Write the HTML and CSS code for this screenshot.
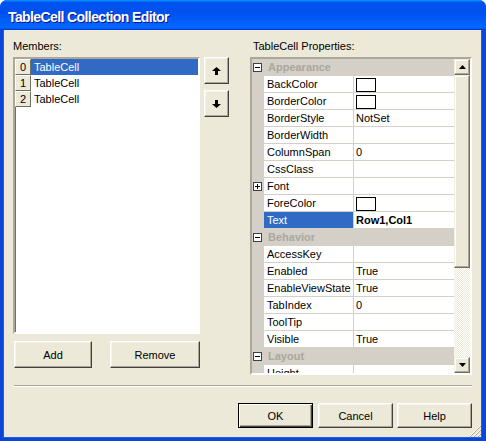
FILE: index.html
```html
<!DOCTYPE html>
<html lang="en">
<head>
<meta charset="utf-8">
<title>TableCell Collection Editor</title>
<link rel="stylesheet" href="styles.css">
</head>
<body>
<div class="window">
  <div class="titlebar"><span class="title">TableCell Collection Editor</span></div>
  <div class="client">
    <div class="top">
      <div class="members">
        <div class="label">Members:</div>
        <div class="members-main">
          <div class="listbox">
            <div class="lrow selected"><span class="idx">0</span><span class="lname">TableCell</span></div>
            <div class="lrow"><span class="idx">1</span><span class="lname">TableCell</span></div>
            <div class="lrow"><span class="idx">2</span><span class="lname">TableCell</span></div>
          </div>
          <div class="order-btns">
            <button class="btn order" type="button" aria-label="Move up">
              <svg width="9" height="8" viewBox="0 0 9 8"><polygon points="4.5,0 9,4 6,4 6,8 3,8 3,4 0,4" fill="#000"/></svg>
            </button>
            <button class="btn order" type="button" aria-label="Move down">
              <svg width="9" height="8" viewBox="0 0 9 8"><polygon points="4.5,8 9,4 6,4 6,0 3,0 3,4 0,4" fill="#000"/></svg>
            </button>
          </div>
        </div>
        <div class="member-actions">
          <button class="btn add" type="button">Add</button>
          <button class="btn remove" type="button">Remove</button>
        </div>
      </div>
      <div class="props">
        <div class="label props-label">TableCell Properties:</div>
        <div class="grid">
          <div class="rows">
            <div class="prow cat"><span class="gutter"><i class="expander"></i></span><span class="cname">Appearance</span></div>
            <div class="prow"><span class="gutter"></span><span class="pname">BackColor</span><span class="pval"><i class="swatch"></i></span></div>
            <div class="prow"><span class="gutter"></span><span class="pname">BorderColor</span><span class="pval"><i class="swatch"></i></span></div>
            <div class="prow"><span class="gutter"></span><span class="pname">BorderStyle</span><span class="pval">NotSet</span></div>
            <div class="prow"><span class="gutter"></span><span class="pname">BorderWidth</span><span class="pval"></span></div>
            <div class="prow"><span class="gutter"></span><span class="pname">ColumnSpan</span><span class="pval">0</span></div>
            <div class="prow"><span class="gutter"></span><span class="pname">CssClass</span><span class="pval"></span></div>
            <div class="prow"><span class="gutter"><i class="expander plus"></i></span><span class="pname">Font</span><span class="pval"></span></div>
            <div class="prow"><span class="gutter"></span><span class="pname">ForeColor</span><span class="pval"><i class="swatch"></i></span></div>
            <div class="prow"><span class="gutter"></span><span class="pname sel">Text</span><span class="pval bold">Row1,Col1</span></div>
            <div class="prow cat"><span class="gutter"><i class="expander"></i></span><span class="cname">Behavior</span></div>
            <div class="prow"><span class="gutter"></span><span class="pname">AccessKey</span><span class="pval"></span></div>
            <div class="prow"><span class="gutter"></span><span class="pname">Enabled</span><span class="pval">True</span></div>
            <div class="prow"><span class="gutter"></span><span class="pname">EnableViewState</span><span class="pval">True</span></div>
            <div class="prow"><span class="gutter"></span><span class="pname">TabIndex</span><span class="pval">0</span></div>
            <div class="prow"><span class="gutter"></span><span class="pname">ToolTip</span><span class="pval"></span></div>
            <div class="prow"><span class="gutter"></span><span class="pname">Visible</span><span class="pval">True</span></div>
            <div class="prow cat"><span class="gutter"><i class="expander"></i></span><span class="cname">Layout</span></div>
            <div class="prow"><span class="gutter"></span><span class="pname">Height</span><span class="pval"></span></div>
          </div>
          <div class="vscroll">
            <div class="sb-btn">
              <svg width="7" height="4" viewBox="0 0 7 4"><polygon points="3.5,0 7,4 0,4" fill="#000"/></svg>
            </div>
            <div class="sb-thumb"></div>
            <div class="sb-track"></div>
            <div class="sb-btn">
              <svg width="7" height="4" viewBox="0 0 7 4"><polygon points="0,0 7,0 3.5,4" fill="#000"/></svg>
            </div>
          </div>
        </div>
      </div>
    </div>
    <div class="separator"></div>
    <div class="dialog-btns">
      <button class="btn dlg default" type="button">OK</button>
      <button class="btn dlg cancel" type="button">Cancel</button>
      <button class="btn dlg help" type="button">Help</button>
    </div>
    <svg class="grip" width="12" height="12" viewBox="0 0 12 12">
      <g stroke-width="1">
        <line x1="11" y1="1" x2="1" y2="11" stroke="#fff"/>
        <line x1="12" y1="1" x2="1" y2="12" stroke="#aca899"/>
        <line x1="11" y1="5" x2="5" y2="11" stroke="#fff"/>
        <line x1="12" y1="5" x2="5" y2="12" stroke="#aca899"/>
        <line x1="11" y1="9" x2="9" y2="11" stroke="#fff"/>
        <line x1="12" y1="9" x2="9" y2="12" stroke="#aca899"/>
      </g>
    </svg>
  </div>
</div>
</body>
</html>
```
FILE: styles.css
```css
* { box-sizing: border-box; }

html, body {
  margin: 0;
  padding: 0;
  background: #ffffff;
}

body {
  font-family: "Liberation Sans", Arial, sans-serif;
  font-size: 11px;
  color: #000;
}

/* window frame */
.window {
  width: 486px;
  height: 441px;
  display: flex;
  flex-direction: column;
  background: #0a46d8;
  border-radius: 7px 7px 0 0;
  overflow: hidden;
}

.titlebar {
  height: 30px;
  flex: none;
  display: flex;
  align-items: center;
  padding: 3px 0 0 8px;
  background: linear-gradient(180deg, #0997ff 0, #0053ee 8%, #0050ee 40%, #0066ff 88%, #0066ff 93%, #005bff 95%, #003dd7 96%, #003dd7 100%);
}

.title {
  font-family: "Liberation Sans", Arial, sans-serif;
  font-weight: bold;
  font-size: 14px;
  letter-spacing: -0.6px;
  color: #fff;
  text-shadow: 1px 1px #0f1089;
}

.client {
  position: relative;
  flex: 1;
  margin: 0 4px 3px 3px;
  border: 1px solid #1c5ee8;
  border-top: 0;
  background: #ece9d8;
  padding: 10px 9px 9px 9px;
  display: flex;
  flex-direction: column;
}

.label {
  height: 13px;
  line-height: 13px;
  margin-bottom: 4px;
  white-space: nowrap;
}

.top {
  display: flex;
  align-items: flex-start;
  height: 335px;
}

/* members list */
.members {
  display: flex;
  flex-direction: column;
}

.members-main {
  display: flex;
  align-items: flex-start;
}

.listbox {
  width: 187px;
  height: 277px;
  background: #fff;
  border: 2px solid;
  border-color: #aca899 #fff #fff #aca899;
  box-shadow: inset 1px 1px #716f64;
  padding: 0;
}

.lrow {
  display: flex;
  height: 16px;
  line-height: 16px;
}

.idx {
  width: 16px;
  flex: none;
  text-align: center;
  background: #ece9d8;
  border: 1px solid;
  border-color: #fff #716f64 #716f64 #fff;
  line-height: 14px;
}

.lname {
  flex: 1;
  padding-left: 3px;
}

.lrow.selected .lname {
  background: #316ac5;
  color: #fff;
}

.order-btns {
  display: flex;
  flex-direction: column;
  gap: 6px;
  margin-left: 4px;
}

/* classic push buttons */
.btn {
  font: inherit;
  color: #000;
  background: #ece9d8;
  border: 1px solid;
  border-color: #fff #404040 #404040 #fff;
  box-shadow: inset -1px -1px #aca899, inset 1px 1px #f6f4ec;
  padding: 0;
  margin: 0;
  display: flex;
  align-items: center;
  justify-content: center;
}

.btn.order {
  width: 25px;
  height: 27px;
}

.member-actions {
  display: flex;
  margin-top: 7px;
}

.btn.add {
  width: 78px;
  height: 27px;
  margin-left: 1px;
}

.btn.remove {
  width: 90px;
  height: 27px;
  margin-left: 18px;
}

/* property grid */
.props {
  margin-left: 21px;
  display: flex;
  flex-direction: column;
}

.props-label {
  padding-left: 3px;
}

.grid {
  width: 222px;
  height: 318px;
  display: flex;
  border: 2px solid;
  border-color: #aca899 #fff #fff #aca899;
  box-shadow: inset 1px 1px #d4d0c8;
  background: #fff;
}

.rows {
  flex: 1;
  height: 314px;
  overflow: hidden;
}

.prow {
  display: flex;
  height: 17px;
  line-height: 16px;
  white-space: nowrap;
}

.gutter {
  width: 12px;
  flex: none;
  background: #d4d0c8;
  position: relative;
}

.pname {
  width: 90px;
  flex: none;
  padding-left: 3px;
  border-right: 1px solid #d4d0c8;
  border-bottom: 1px solid #d4d0c8;
}

.pname.sel {
  background: #316ac5;
  color: #fff;
}

.pval {
  flex: 1;
  padding-left: 2px;
  border-bottom: 1px solid #d4d0c8;
}

.pval.bold {
  font-weight: bold;
}

.swatch {
  display: block;
  width: 20px;
  height: 14px;
  margin-top: 2px;
  border: 1px solid #000;
  background: #fff;
}

.prow.cat {
  background: #d4d0c8;
}

.cname {
  padding-left: 4px;
  font-weight: bold;
  color: #aaa79f;
}

.expander {
  position: absolute;
  left: 1px;
  top: 4px;
  width: 9px;
  height: 9px;
  border: 1px solid #404040;
  background: #fff;
}

.expander::before {
  content: "";
  position: absolute;
  left: 1px;
  top: 3px;
  width: 5px;
  height: 1px;
  background: #000;
}

.expander.plus::after {
  content: "";
  position: absolute;
  left: 3px;
  top: 1px;
  width: 1px;
  height: 5px;
  background: #000;
}

/* vertical scrollbar */
.vscroll {
  width: 16px;
  flex: none;
  display: flex;
  flex-direction: column;
}

.sb-btn,
.sb-thumb {
  background: #ece9d8;
  border: 1px solid;
  border-color: #f1efe2 #716f64 #716f64 #f1efe2;
  box-shadow: inset -1px -1px #aca899, inset 1px 1px #fff;
}

.sb-btn {
  height: 16px;
  display: flex;
  align-items: center;
  justify-content: center;
}

.sb-thumb {
  height: 193px;
}

.sb-track {
  flex: 1;
  background-color: #fff;
  background-image: repeating-conic-gradient(#ece9d8 0 25%, #fff 0 50%);
  background-size: 2px 2px;
}

/* footer */
.separator {
  margin: 10px 0 0 1px;
  height: 2px;
  border-top: 1px solid #aca899;
  border-bottom: 1px solid #fff;
}

.dialog-btns {
  display: flex;
  justify-content: flex-end;
  margin-top: 16px;
}

.btn.dlg {
  width: 75px;
  height: 25px;
}

.btn.default {
  border-color: #000;
  box-shadow: inset 1px 1px #fff, inset -1px -1px #404040, inset -2px -2px #aca899;
}

.btn.cancel {
  margin-left: 5px;
}

.btn.help {
  margin-left: 4px;
}

.grip {
  position: absolute;
  right: 0;
  bottom: 0;
}
```
